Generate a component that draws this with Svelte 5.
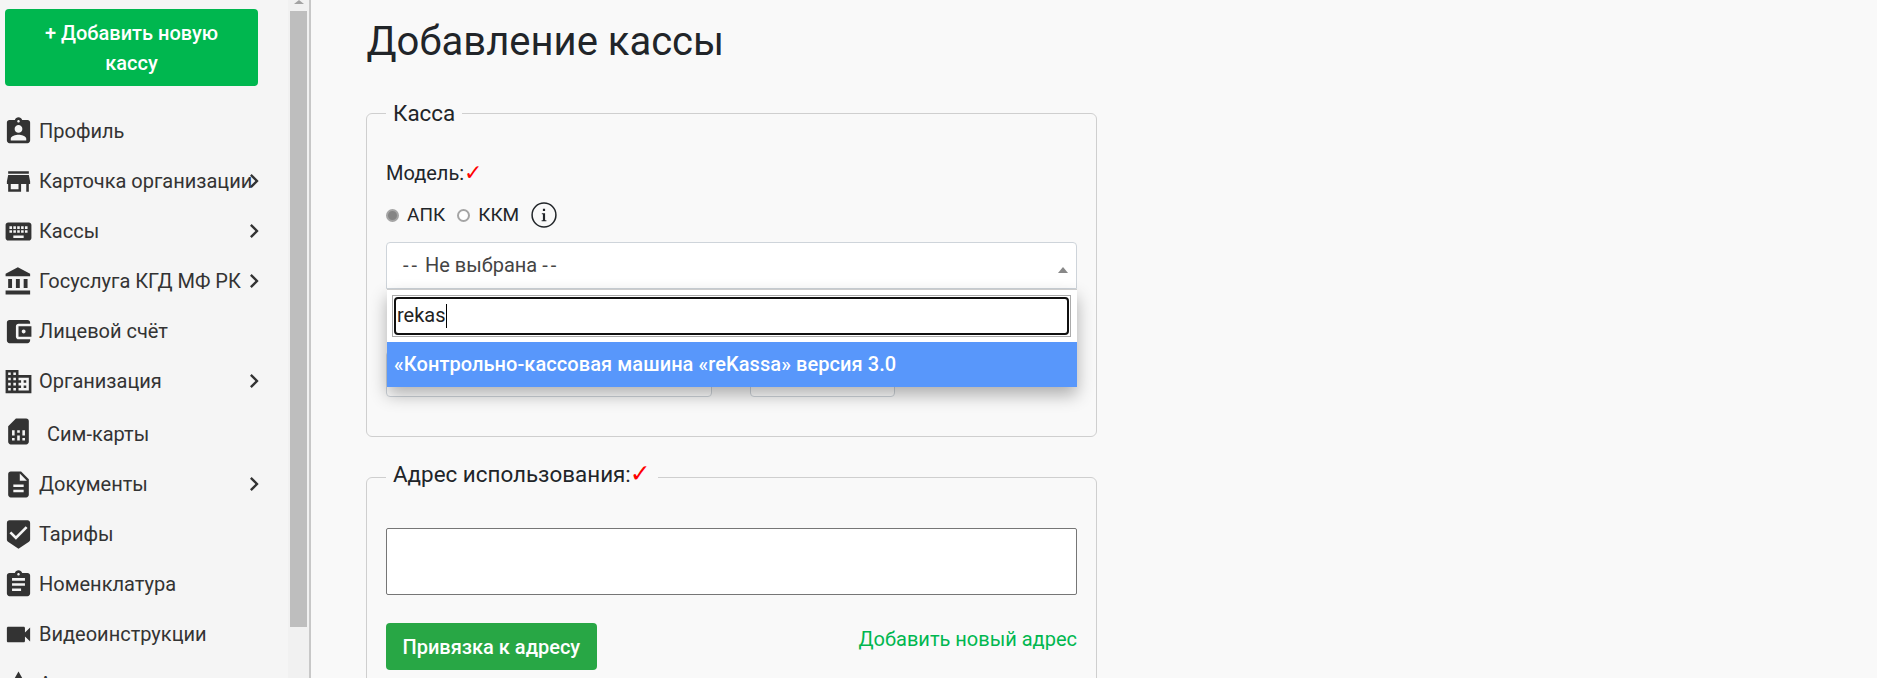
<script>
	const menu = [
		{ label: 'Профиль', icon: 'M19 3h-4.18C14.4 1.84 13.3 1 12 1c-1.3 0-2.4.84-2.82 2H5c-1.1 0-2 .9-2 2v14c0 1.1.9 2 2 2h14c1.1 0 2-.9 2-2V5c0-1.1-.9-2-2-2zm-7 0c.55 0 1 .45 1 1s-.45 1-1 1-1-.45-1-1 .45-1 1-1zm0 4c1.66 0 3 1.34 3 3s-1.34 3-3 3-3-1.34-3-3 1.34-3 3-3zm6 12H6v-1.4c0-2 4-3.1 6-3.1s6 1.1 6 3.1V19z' },
		{ label: 'Карточка организации', more: true, icon: 'M20 4H4v2h16V4zm1 10v-2l-1-5H4l-1 5v2h1v6h10v-6h4v6h2v-6h1zm-9 4H6v-4h6v4z' },
		{ label: 'Кассы', more: true, icon: 'M20 5H4c-1.1 0-1.99.9-1.99 2L2 17c0 1.1.9 2 2 2h16c1.1 0 2-.9 2-2V7c0-1.1-.9-2-2-2zm-9 3h2v2h-2V8zm0 3h2v2h-2v-2zM8 8h2v2H8V8zm0 3h2v2H8v-2zm-1 2H5v-2h2v2zm0-3H5V8h2v2zm9 7H8v-2h8v2zm0-4h-2v-2h2v2zm0-3h-2V8h2v2zm3 3h-2v-2h2v2zm0-3h-2V8h2v2z' },
		{ label: 'Госуслуга КГД МФ РК', more: true, icon: 'M4 10v7h3v-7H4zm6 0v7h3v-7h-3zM2 22h19v-3H2v3zm14-12v7h3v-7h-3zm-4.5-9L2 6v2h19V6l-9.5-5z' },
		{ label: 'Лицевой счёт', icon: 'M21 18v1c0 1.1-.9 2-2 2H5c-1.11 0-2-.9-2-2V5c0-1.1.89-2 2-2h14c1.1 0 2 .9 2 2v1h-9c-1.11 0-2 .9-2 2v8c0 1.1.89 2 2 2h9zm-9-2h10V8H12v8zm4-2.5c-.83 0-1.5-.67-1.5-1.5s.67-1.5 1.5-1.5 1.5.67 1.5 1.5-.67 1.5-1.5 1.5z' },
		{ label: 'Организация', more: true, icon: 'M12 7V3H2v18h20V7H12zM6 19H4v-2h2v2zm0-4H4v-2h2v2zm0-4H4V9h2v2zm0-4H4V5h2v2zm4 12H8v-2h2v2zm0-4H8v-2h2v2zm0-4H8V9h2v2zm0-4H8V5h2v2zm10 12h-8v-2h2v-2h-2v-2h2v-2h-2V9h8v10zm-2-8h-2v2h2v-2zm0 4h-2v2h2v-2z' },
		{ label: 'Сим-карты', sim: true, icon: 'M19.99 4c0-1.1-.89-2-1.99-2h-8L4 8v12c0 1.1.9 2 2 2h12c1.1 0 2-.9 2-2l-.01-16zM9 19H7v-2h2v2zm8 0h-2v-2h2v2zm-8-4H7v-4h2v4zm4 4h-2v-4h2v4zm0-6h-2v-2h2v2zm4 2h-2v-4h2v4z' },
		{ label: 'Документы', more: true, icon: 'M14 2H6c-1.1 0-1.99.9-1.99 2L4 20c0 1.1.89 2 1.99 2H18c1.1 0 2-.9 2-2V8l-6-6zm2 16H8v-2h8v2zm0-4H8v-2h8v2zm-3-5V3.5L18.5 9H13z' },
		{ label: 'Тарифы', icon: 'M19 1H5c-1.1 0-1.99.9-1.99 2L3 15.93c0 .69.35 1.3.88 1.66L12 23l8.11-5.41c.53-.36.88-.97.88-1.66L21 3c0-1.1-.9-2-2-2zm-9 15l-5-5 1.41-1.41L10 13.17l7.59-7.59L19 7l-9 9z' },
		{ label: 'Номенклатура', icon: 'M19 3h-4.18C14.4 1.84 13.3 1 12 1c-1.3 0-2.4.84-2.82 2H5c-1.1 0-2 .9-2 2v14c0 1.1.9 2 2 2h14c1.1 0 2-.9 2-2V5c0-1.1-.9-2-2-2zm-7 0c.55 0 1 .45 1 1s-.45 1-1 1-1-.45-1-1 .45-1 1-1zm2 14H7v-2h7v2zm3-4H7v-2h10v2zm0-4H7V7h10v2z' },
		{ label: 'Видеоинструкции', icon: 'M17 10.5V7c0-.55-.45-1-1-1H4c-.55 0-1 .45-1 1v10c0 .55.45 1 1 1h12c.55 0 1-.45 1-1v-3.5l4 4v-11l-4 4z' },
		{ label: 'Акции', icon: 'M1 21h22L12 2 1 21z' }
	];
</script>

<div class="page">
	<aside class="sidebar">
		<button class="add-btn" type="button">+ Добавить новую кассу</button>
		<nav class="menu">
			{#each menu as item (item.label)}
				<div class="item" class:sim={item.sim}>
					<svg class="icon" viewBox="0 0 24 24"><path d={item.icon} /></svg>
					<span class="label">{item.label}</span>
					{#if item.more}
						<svg class="chevron" viewBox="0 0 24 24">
							<path d="M10 6L8.59 7.41 13.17 12l-4.58 4.59L10 18l6-6z" />
						</svg>
					{/if}
				</div>
			{/each}
		</nav>
	</aside>

	<div class="scrollbar">
		<div class="arrow"></div>
		<div class="thumb"></div>
	</div>

	<main class="content">
		<h1>Добавление кассы</h1>

		<fieldset class="cash">
			<legend>Касса</legend>
			<div class="field-label">Модель:<span class="req">✓</span></div>
			<div class="radios">
				<input type="radio" name="kind" checked />
				<span class="radio-text">АПК</span>
				<input type="radio" name="kind" />
				<span class="radio-text">ККМ</span>
				<svg class="info" viewBox="0 0 24 24">
					<circle cx="12" cy="12" r="11" />
					<path class="glyph" d="M11 6.3h2v2h-2zM10 10.4h3v6.4h1.2v1H9.8v-1H11v-5.4h-1z" />
				</svg>
			</div>

			<div class="select-wrap">
				<div class="select">
					<span><span class="dash">--</span> Не выбрана <span class="dash">--</span></span>
					<span class="caret-up"></span>
				</div>
				<div class="dropdown">
					<div class="search-box">
						<div class="search">
							<div class="search-inner">rekas<span class="cursor"></span></div>
						</div>
					</div>
					<div class="option">«Контрольно-кассовая машина «reKassa» версия 3.0</div>
				</div>
			</div>

			<div class="hidden-row">
				<div class="box wide"></div>
				<div class="box narrow"></div>
			</div>
		</fieldset>

		<fieldset class="address">
			<legend>Адрес использования:<span class="req">✓</span></legend>
			<textarea></textarea>
			<div class="actions">
				<button class="bind-btn" type="button">Привязка к адресу</button>
				<span class="add-link">Добавить новый адрес</span>
			</div>
		</fieldset>
	</main>
</div>

<style>
	:global(body) {
		overflow: hidden;
		background: #f9f9f9;
	}

	.page {
		display: flex;
		height: 678px;
		overflow: hidden;
		font-family: Roboto, 'DejaVu Sans', sans-serif;
		font-size: 20px;
		line-height: 1.5;
		color: #212529;
	}

	.sidebar {
		flex: 0 0 288px;
		box-sizing: border-box;
		padding: 9px 0 0 0;
		background: #f5f5f5;
		overflow: hidden;
	}

	.add-btn {
		display: block;
		box-sizing: border-box;
		width: 253px;
		height: 77px;
		margin-left: 5px;
		padding: 8px 30px;
		border: none;
		border-radius: 4px;
		background: #00b74f;
		color: #fff;
		font: 500 20px/30px Roboto, sans-serif;
	}

	.menu {
		margin-top: 20px;
	}

	.item {
		display: flex;
		align-items: center;
		box-sizing: border-box;
		width: 268px;
		height: 50px;
		padding-left: 3px;
		color: #333;
	}

	.item.sim {
		height: 53px;
	}

	.icon {
		flex: 0 0 31px;
		height: 31px;
		margin-right: 5px;
		fill: #333;
	}

	.label {
		flex: 1;
		min-width: 0;
		white-space: nowrap;
	}

	.sim .icon {
		margin-top: -3px;
	}

	.sim .label {
		margin: 3px 0 0 8px;
	}

	.chevron {
		position: relative;
		flex: 0 0 28px;
		height: 28px;
		fill: #333;
	}

	.scrollbar {
		flex: 0 0 21px;
		background: #f1f1f1;
		border-right: 2px solid #c8c8c8;
	}

	.arrow {
		width: 0;
		height: 0;
		margin: 0 auto;
		border-left: 5px solid transparent;
		border-right: 5px solid transparent;
		border-bottom: 4px solid #a3a3a3;
	}

	.thumb {
		width: 17px;
		height: 616px;
		margin: 7px 0 0 2px;
		background: #bebebe;
	}

	.content {
		flex: 1;
		padding: 18px 0 0 55px;
		background: #f9f9f9;
	}

	h1 {
		margin: 0 0 35px 0.5px;
		font-size: 40px;
		font-weight: 400;
		line-height: 48px;
	}

	fieldset {
		box-sizing: border-box;
		width: 731px;
		margin: 0;
		padding: 0 19px 39px;
		border: 1px solid #cfcfcf;
		border-radius: 6px;
		min-inline-size: 0;
	}

	legend {
		padding: 0 7px;
		font-size: 22.4px;
		line-height: 24px;
	}

	.req {
		color: #f00;
		font-family: 'DejaVu Sans', sans-serif;
		font-size: 22px;
		font-weight: 700;
		line-height: 0;
	}

	legend .req {
		margin-left: -1px;
		font-size: 25px;
	}

	.field-label {
		margin-top: 33px;
		height: 30px;
	}

	.radios {
		display: flex;
		align-items: center;
		height: 27px;
		margin-top: 13.5px;
	}

	input[type='radio'] {
		appearance: none;
		box-sizing: border-box;
		width: 13px;
		height: 13px;
		margin: 0 8px 0 0;
		border: 2px solid #a5a5a5;
		border-radius: 50%;
		background: #fff;
	}

	input[type='radio']:checked {
		background: #858585;
	}

	.radio-text {
		margin-right: 12px;
		font-size: 19px;
	}

	.info {
		width: 26px;
		height: 26px;
	}

	.info circle {
		fill: none;
		stroke: #212529;
		stroke-width: 1.4;
	}

	.glyph {
		fill: #212529;
	}

	.select-wrap {
		position: relative;
		margin-top: 13px;
	}

	.select {
		display: flex;
		align-items: center;
		justify-content: space-between;
		box-sizing: border-box;
		height: 47px;
		padding: 0 8px 0 16px;
		border: 1px solid #ced4da;
		border-radius: 4px 4px 0 0;
		background: #fff;
		color: #444;
	}

	.dash {
		letter-spacing: 3px;
	}

	.caret-up {
		width: 0;
		height: 0;
		margin-top: 9px;
		border-left: 5px solid transparent;
		border-right: 5px solid transparent;
		border-bottom: 6px solid #888;
	}

	.dropdown {
		position: absolute;
		top: 47px;
		left: 1px;
		right: 0;
		z-index: 2;
		box-shadow: 0 8px 16px rgba(0, 0, 0, 0.3);
		background: #fff;
		border-top: 1px solid #ccc;
		box-sizing: border-box;
	}

	.search-box {
		padding: 5px 6px 5px 5px;
		height: 52px;
		box-sizing: border-box;
	}

	.search {
		box-sizing: border-box;
		height: 42px;
		padding: 1px;
		border: 1px solid #aaa;
	}

	.search-inner {
		box-sizing: border-box;
		height: 38px;
		padding-left: 1px;
		border: 2px solid #101010;
		border-radius: 4px;
		line-height: 32px;
		color: #222;
	}

	.cursor {
		display: inline-block;
		width: 1px;
		height: 24px;
		background: #000;
		vertical-align: -6px;
	}

	.option {
		height: 45px;
		box-sizing: border-box;
		padding-left: 7px;
		background: #5897fb;
		color: #fff;
		font-weight: 500;
		line-height: 44px;
		letter-spacing: 0.07px;
	}

	.hidden-row {
		display: flex;
		gap: 38px;
		margin-top: 62px;
	}

	.box {
		box-sizing: border-box;
		height: 46px;
		border: 1px solid #ced4da;
		border-radius: 4px;
		background: #fff;
	}

	.wide {
		width: 326px;
	}

	.narrow {
		width: 145px;
	}

	.address {
		margin-top: 25px;
		padding-bottom: 60px;
	}

	.address legend {
		padding-bottom: 8px;
	}

	textarea {
		display: block;
		box-sizing: border-box;
		width: 100%;
		height: 67px;
		margin-top: 34px;
		border: 1px solid #767676;
		border-radius: 2px;
		background: #fff;
		resize: none;
	}

	.actions {
		display: flex;
		justify-content: space-between;
		align-items: flex-start;
		margin-top: 28px;
	}

	.bind-btn {
		height: 47px;
		padding: 1px 16.5px 0;
		border: none;
		border-radius: 4px;
		background: #28a745;
		color: #fff;
		font: 500 20px Roboto, sans-serif;
	}

	.add-link {
		margin-top: 1px;
		color: #00b74f;
	}
</style>
